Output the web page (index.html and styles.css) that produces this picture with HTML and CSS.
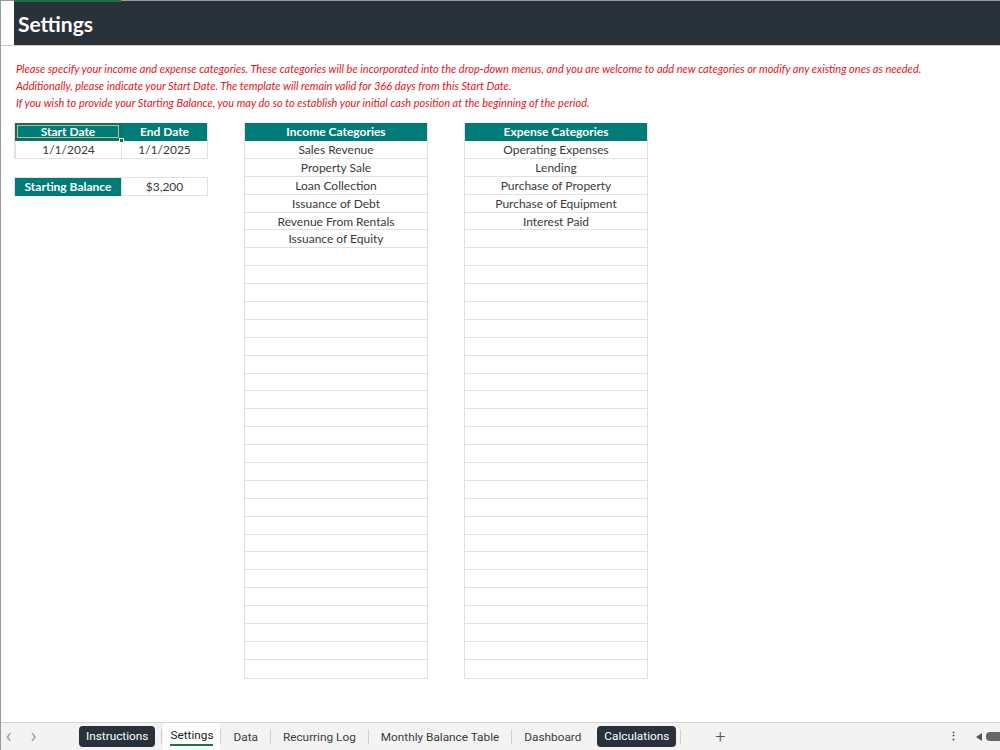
FILE: index.html
```html
<!DOCTYPE html>
<html lang="en">
<head>
    <meta charset="UTF-8">
    <meta name="viewport" content="width=device-width, initial-scale=1.0">
    <title>Settings</title>
    <link rel="stylesheet" href="styles.css">
</head>
<body>
  <div class="sheet">
    <div class="topbar">
      <div class="gutter"></div>
      <div class="title">Settings</div>
    </div>

    <div class="content">
      <div class="notes">
        <p>Please specify your income and expense categories. These categories will be incorporated into the drop-down menus, and you are welcome to add new categories or modify any existing ones as needed.</p>
        <p>Additionally, please indicate your Start Date. The template will remain valid for 366 days from this Start Date.</p>
        <p>If you wish to provide your Starting Balance, you may do so to establish your initial cash position at the beginning of the period.</p>
      </div>

      <div class="tables">
        <div class="dates">
          <div class="grid2">
            <div class="cell head selected">Start Date<span class="handle"></span></div>
            <div class="cell head">End Date</div>
            <div class="cell">1/1/2024</div>
            <div class="cell">1/1/2025</div>
          </div>
          <div class="grid2 balance">
            <div class="cell head">Starting Balance</div>
            <div class="cell">$3,200</div>
          </div>
        </div>

        <div class="list">
          <div class="cell head">Income Categories</div>
          <div class="cell">Sales Revenue</div>
          <div class="cell">Property Sale</div>
          <div class="cell">Loan Collection</div>
          <div class="cell">Issuance of Debt</div>
          <div class="cell">Revenue From Rentals</div>
          <div class="cell">Issuance of Equity</div>
          <div class="cell"></div><div class="cell"></div><div class="cell"></div><div class="cell"></div><div class="cell"></div><div class="cell"></div>
          <div class="cell"></div><div class="cell"></div><div class="cell"></div><div class="cell"></div><div class="cell"></div><div class="cell"></div>
          <div class="cell"></div><div class="cell"></div><div class="cell"></div><div class="cell"></div><div class="cell"></div><div class="cell"></div>
          <div class="cell"></div><div class="cell"></div><div class="cell"></div><div class="cell"></div><div class="cell"></div><div class="cell"></div>
        </div>

        <div class="list">
          <div class="cell head">Expense Categories</div>
          <div class="cell">Operating Expenses</div>
          <div class="cell">Lending</div>
          <div class="cell">Purchase of Property</div>
          <div class="cell">Purchase of Equipment</div>
          <div class="cell">Interest Paid</div>
          <div class="cell"></div>
          <div class="cell"></div><div class="cell"></div><div class="cell"></div><div class="cell"></div><div class="cell"></div><div class="cell"></div>
          <div class="cell"></div><div class="cell"></div><div class="cell"></div><div class="cell"></div><div class="cell"></div><div class="cell"></div>
          <div class="cell"></div><div class="cell"></div><div class="cell"></div><div class="cell"></div><div class="cell"></div><div class="cell"></div>
          <div class="cell"></div><div class="cell"></div><div class="cell"></div><div class="cell"></div><div class="cell"></div><div class="cell"></div>
        </div>
      </div>
    </div>

    <div class="tabbar">
      <span class="arrow">&#8249;</span>
      <span class="arrow">&#8250;</span>
      <span class="tab pill first">Instructions</span>
      <span class="sep"></span>
      <span class="tab active"><span class="uline">Settings</span></span>
      <span class="sep"></span>
      <span class="tab">Data</span>
      <span class="sep"></span>
      <span class="tab">Recurring Log</span>
      <span class="sep"></span>
      <span class="tab">Monthly Balance Table</span>
      <span class="sep"></span>
      <span class="tab">Dashboard</span>
      <span class="tab pill">Calculations</span>
      <span class="sep"></span>
      <span class="plus">+</span>
      <span class="spacer"></span>
      <span class="more">&#8942;</span>
      <span class="scroll">
        <svg width="8" height="8" viewBox="0 0 8 8"><path d="M7 0 L1 4 L7 8 Z" fill="#555"/></svg>
        <span class="thumb"></span>
      </span>
    </div>
  </div>
</body>
</html>
```

FILE: styles.css
```css
* {
  box-sizing: border-box;
}

body {
  margin: 0;
  font-family: Lato, "Liberation Sans", sans-serif;
  background: #fff;
}

.sheet {
  width: 1000px;
  height: 750px;
  display: flex;
  flex-direction: column;
  border-left: 1px solid #9a9a9a;
  overflow: hidden;
}

.topbar {
  display: flex;
  height: 46px;
  border-top: 1px solid #9a9a9a;
  border-bottom: 1px solid #c8c8c8;
}

.gutter {
  width: 13px;
}

.title {
  flex: 1;
  background: #29323b;
  color: #fff;
  font-weight: 700;
  font-size: 21px;
  padding: 10px 0 0 4px;
  position: relative;
}

/* green marker of the selected column */
.title:before {
  content: "";
  position: absolute;
  top: -1px;
  left: 0;
  width: 107px;
  height: 2px;
  background: #1e7145;
}

.content {
  flex: 1;
  padding: 14px 0 0 13px;
}

.notes {
  padding-left: 2px;
}

.notes p {
  margin: 0;
  color: #e3141b;
  font-style: italic;
  font-size: 11px;
  line-height: 17px;
  white-space: nowrap;
}

.tables {
  display: flex;
  align-items: flex-start;
  gap: 36px;
  margin-top: 12px;
}

.cell {
  height: 17.9px;
  line-height: 17px;
  font-size: 12px;
  color: #3a3a3a;
  text-align: center;
  border-bottom: 1px solid #e2e2e2;
  white-space: nowrap;
}

.cell.head {
  background: #007c78;
  color: #fff;
  font-weight: 700;
  font-size: 12px;
  border-bottom-color: #007c78;
  height: 18px;
}

.grid2 {
  display: grid;
  grid-template-columns: 106px 86px;
  border-left: 1px solid #e2e2e2;
  border-right: 1px solid #e2e2e2;
}

.grid2 .cell + .cell {
  border-left: 1px solid #e2e2e2;
}

.grid2 .head + .head {
  border-left-color: #007c78;
}

.balance {
  margin-top: 18px;
  border-top: 1px solid #e2e2e2;
}

.selected {
  position: relative;
  box-shadow: inset 0 0 0 2px #1e6b45, inset 0 0 0 3px #9cc7b3;
}

.handle {
  position: absolute;
  right: -3px;
  bottom: -3px;
  width: 5px;
  height: 5px;
  background: #1e6b45;
  border: 1px solid #fff;
}

.list {
  width: 184px;
  border: 1px solid #e2e2e2;
  border-top: none;
}

.list .cell:last-child {
  border-bottom: none;
}

.tabbar {
  height: 28px;
  flex-shrink: 0;
  display: flex;
  align-items: center;
  background: #f3f3f3;
  border-top: 1px solid #d4d4d4;
  font-family: Roboto, "Noto Sans", sans-serif;
  font-size: 11.8px;
  color: #3c3c3c;
}

.arrow {
  width: 25px;
  text-align: center;
  font-size: 20px;
  color: #a0a0a0;
  line-height: 20px;
  margin-top: -2px;
}

.arrow:first-child {
  margin-left: -5px;
}

.tab {
  padding: 0 12px;
  white-space: nowrap;
}

.tab.pill {
  background: #29323b;
  color: #fff;
  border-radius: 4px;
  padding: 0 7px;
  height: 21px;
  line-height: 21px;
  margin: 0 4px;
}

.tab.pill.first {
  margin: 0 6px 0 33px;
}

.tab.active {
  background: #fff;
  height: 27px;
  line-height: 25px;
  padding: 0 7px;
  margin-left: 1px;
  color: #222;
}

.uline {
  display: inline-block;
  line-height: 18px;
  border-bottom: 2px solid #1e7145;
}

.sep {
  width: 1px;
  height: 15px;
  background: #d0d0d0;
}

.plus {
  margin-left: 34px;
  font-size: 18px;
  color: #555;
  font-weight: 300;
}

.spacer {
  flex: 1;
}

.more {
  font-size: 11px;
  color: #444;
  font-weight: 700;
  margin-right: 16px;
}

.scroll {
  display: flex;
  align-items: center;
  gap: 3px;
}

.thumb {
  width: 14px;
  height: 9px;
  background: #666;
  border-radius: 4px 0 0 4px;
}
```
